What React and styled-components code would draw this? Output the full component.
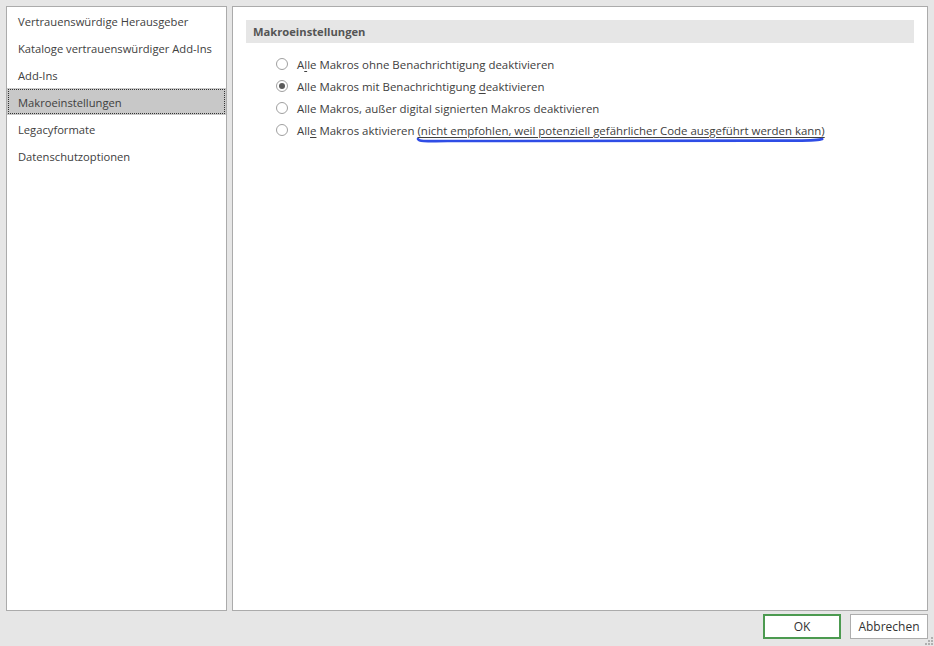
import React from "react";
import styled, { createGlobalStyle } from "styled-components";

const Global = createGlobalStyle`
  html, body { margin: 0; padding: 0; background: #e6e6e6; }
  body { font-family: "Segoe UI", "Open Sans", "Noto Sans", sans-serif; font-size: 11.2px; color: #444; }
  #root { height: 646px; }
`;

const Window = styled.div`
  position: relative;
  width: 934px;
  height: 646px;
  box-sizing: border-box;
  padding: 6px 6px 0 6px;
  display: flex;
  flex-direction: column;
  background: #e6e6e6;
`;

const Main = styled.div`
  display: flex;
  gap: 5px;
  height: 605px;
`;

const Panel = styled.div`
  box-sizing: border-box;
  background: #fff;
  border: 1px solid #ababab;
  height: 100%;
`;

const Nav = styled(Panel)`
  width: 221px;
  flex: none;
`;

const Content = styled(Panel)`
  flex: 1;
  padding: 13px 13px 0 13px;
`;

const NavItem = styled.div`
  height: 27px;
  display: flex;
  align-items: center;
  padding: 1px 0 0 11px;
  box-sizing: border-box;
  white-space: nowrap;
  color: #404040;
  background: ${p => (p.$selected ? "#c8c8c8" : "transparent")};
  position: relative;
  ${p =>
    p.$selected &&
    `&::after {
      content: "";
      position: absolute;
      left: 1px; right: 1px; top: 1px; bottom: 1px;
      border: 1px dotted #333;
    }`}
`;

const SectionHeader = styled.div`
  height: 23px;
  background: #e6e6e6;
  display: flex;
  align-items: center;
  padding-left: 7px;
  font-weight: 700;
  color: #555;
`;

const Options = styled.div`
  display: flex;
  flex-direction: column;
  padding: 10px 0 0 30px;
  font-size: 11.45px;
`;

const Row = styled.label`
  height: 22px;
  display: flex;
  align-items: center;
  gap: 9px;
  white-space: nowrap;
  color: #404040;
`;

const Radio = styled.span`
  width: 12px;
  height: 12px;
  box-sizing: border-box;
  border-radius: 50%;
  border: 1px solid #a0a0a0;
  background: #fff;
  display: flex;
  align-items: center;
  justify-content: center;
  flex: none;
  &::after {
    content: "";
    width: 6px;
    height: 6px;
    border-radius: 50%;
    background: ${p => (p.$checked ? "#5a5a5a" : "transparent")};
  }
`;

const Key = styled.span`
  text-decoration: underline;
  text-underline-offset: 2px;
`;

const Marked = styled.span`
  position: relative;
  text-decoration: underline;
  text-underline-offset: 2px;
  text-decoration-thickness: 1px;
`;

const Stroke = styled.svg`
  position: absolute;
  left: -1px;
  top: 13px;
  width: calc(100% + 2px);
  height: 8px;
  overflow: visible;
  pointer-events: none;
`;

const Footer = styled.div`
  display: flex;
  justify-content: flex-end;
  gap: 9px;
  padding-top: 3px;
`;

const Button = styled.button`
  width: 78px;
  height: 25px;
  box-sizing: border-box;
  background: #fff;
  font-family: inherit;
  font-size: 12px;
  color: #333;
  border: ${p => (p.$primary ? "2px solid #4c9a50" : "1px solid #adadad")};
  padding: 0;
  cursor: default;
`;

const Grip = styled.svg`
  position: absolute;
  right: 1px;
  bottom: 1px;
  width: 9px;
  height: 9px;
`;

const navItems = [
  "Vertrauenswürdige Herausgeber",
  "Kataloge vertrauenswürdiger Add-Ins",
  "Add-Ins",
  "Makroeinstellungen",
  "Legacyformate",
  "Datenschutzoptionen",
];

export default function App() {
  return (
    <>
      <Global />
      <Window>
        <Main>
          <Nav>
            {navItems.map((t, i) => (
              <NavItem key={t} $selected={i === 3}>
                {t}
              </NavItem>
            ))}
          </Nav>
          <Content>
            <SectionHeader>Makroeinstellungen</SectionHeader>
            <Options>
              <Row>
                <Radio />
                <span>
                  A<Key>l</Key>le Makros ohne Benachrichtigung deaktivieren
                </span>
              </Row>
              <Row>
                <Radio $checked />
                <span>
                  Alle Makros mit Benachrichtigung <Key>d</Key>eaktivieren
                </span>
              </Row>
              <Row>
                <Radio />
                <span>
                  Alle Makros, außer di<Key>g</Key>ital signierten Makros deaktivieren
                </span>
              </Row>
              <Row>
                <Radio />
                <span>
                  All<Key>e</Key> Makros aktivieren{" "}
                  <Marked>
                    (nicht empfohlen, weil potenziell gefährlicher Code ausgeführt werden kann)
                    <Stroke viewBox="0 0 410 8" preserveAspectRatio="none">
                      <path
                        d="M1 3 C 2 5.5, 6 5.2, 40 5 L 380 4.6 C 396 4.5, 403 4.4, 406 3"
                        fill="none"
                        stroke="#2f4de6"
                        strokeWidth="2.6"
                        strokeLinecap="round"
                        vectorEffect="non-scaling-stroke"
                      />
                    </Stroke>
                  </Marked>
                </span>
              </Row>
            </Options>
          </Content>
        </Main>
        <Footer>
          <Button $primary>OK</Button>
          <Button>Abbrechen</Button>
        </Footer>
        <Grip viewBox="0 0 9 9">
          {[
            [7, 1],
            [4, 4],
            [7, 4],
            [1, 7],
            [4, 7],
            [7, 7],
          ].map(([x, y]) => (
            <rect key={`${x}-${y}`} x={x} y={y} width="2" height="2" fill="#b0b0b0" />
          ))}
        </Grip>
      </Window>
    </>
  );
}
